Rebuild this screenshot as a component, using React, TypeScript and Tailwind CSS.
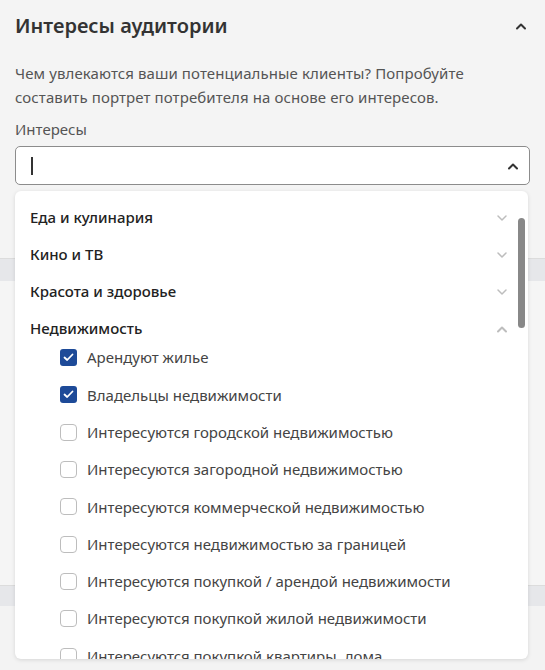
import React from "react";

const Caret = ({ up, className }: { up?: boolean; className?: string }) => (
  <svg width="12" height="8" viewBox="0 0 12 8" className={className} fill="none">
    {up ? (
      <path d="M2 6.5 L6 2.5 L10 6.5" stroke="currentColor" strokeWidth="2" strokeLinecap="round" strokeLinejoin="round" />
    ) : (
      <path d="M2 2 L6 6 L10 2" stroke="currentColor" strokeWidth="1.5" strokeLinecap="round" strokeLinejoin="round" />
    )}
  </svg>
);

const cats = ["Еда и кулинария", "Кино и ТВ", "Красота и здоровье"];
const items: [string, boolean][] = [
  ["Арендуют жилье", true],
  ["Владельцы недвижимости", true],
  ["Интересуются городской недвижимостью", false],
  ["Интересуются загородной недвижимостью", false],
  ["Интересуются коммерческой недвижимостью", false],
  ["Интересуются недвижимостью за границей", false],
  ["Интересуются покупкой / арендой недвижимости", false],
  ["Интересуются покупкой жилой недвижимости", false],
  ["Интересуются покупкой квартиры, дома", false],
];

export default function App() {
  return (
    <div className="relative w-[545px] h-[670px] overflow-hidden bg-[#f4f4f4] text-[15px]" style={{ fontFamily: '"Noto Sans", "Open Sans", sans-serif' }}>
      {/* background sections */}
      <div className="flex flex-col h-full">
        <div className="px-[15px] pt-[11px] h-[258px] shrink-0">
          <div className="flex items-center justify-between h-[30px]">
            <h1 className="text-[20px] font-semibold text-[#333]">Интересы аудитории</h1>
            <Caret up className="text-[#333] mr-[3px]" />
          </div>
          <p className="mt-[20px] text-[15px] leading-[24px] text-[#555] tracking-[0.1px]">
            Чем увлекаются ваши потенциальные клиенты? Попробуйте
            <br />
            составить портрет потребителя на основе его интересов.
          </p>
          <div className="mt-[8px] leading-[24px] text-[#555]">Интересы</div>
          <div className="mt-[5px] h-[39px] rounded-[5px] border border-[#8c8c8c] bg-white flex items-center justify-between pl-[15px] pr-[10px]">
            <div className="w-[1.5px] h-[18px] bg-[#333]" />
            <Caret up className="text-[#333]" />
          </div>
        </div>
        <div className="h-[1px] bg-[#dcdcdc]" />
        <div className="h-[22px] bg-[#e6e7ea]" />
        <div className="h-[304px] bg-[#f5f5f5]" />
        <div className="h-[1px] bg-[#dcdcdc]" />
        <div className="h-[20px] bg-[#e6e7ea]" />
        <div className="flex-1 bg-[#f3f3f3]" />
      </div>

      {/* dropdown */}
      <div className="absolute left-[15px] top-[191px] w-[513px] h-[468px] bg-white rounded-[6px] shadow-[0_1px_4px_rgba(0,0,0,0.12)] overflow-hidden">
        <div className="pt-[8px]">
          {cats.map((c) => (
            <div key={c} className="h-[37px] flex items-center justify-between pl-[15px] pr-[20px]">
              <span className="font-medium text-[#222]">{c}</span>
              <Caret className="text-[#bdbdbd]" />
            </div>
          ))}
          <div className="h-[29px] flex items-start justify-between pl-[15px] pr-[20px] pt-[7px]">
            <span className="font-medium text-[#222] leading-[23px]">Недвижимость</span>
            <Caret up className="text-[#bdbdbd] mt-[8px]" />
          </div>
          {items.map(([t, on]) => (
            <div key={t} className="h-[37.3px] flex items-center pl-[45px]">
              {on ? (
                <div className="w-[17px] h-[17px] rounded-[3px] bg-[#1d4a98] flex items-center justify-center">
                  <svg width="11" height="9" viewBox="0 0 11 9" fill="none">
                    <path d="M1.5 4.5 L4.2 7 L9.5 1.5" stroke="white" strokeWidth="1.8" strokeLinecap="round" strokeLinejoin="round" />
                  </svg>
                </div>
              ) : (
                <div className="w-[17px] h-[17px] rounded-[4px] border-[1.5px] border-[#bdbdbd] bg-white" />
              )}
              <span className="ml-[10px] text-[#444]">{t}</span>
            </div>
          ))}
        </div>
        <div className="absolute left-[503px] top-[27px] w-[7px] h-[110px] rounded-full bg-[#888]" />
      </div>
    </div>
  );
}
